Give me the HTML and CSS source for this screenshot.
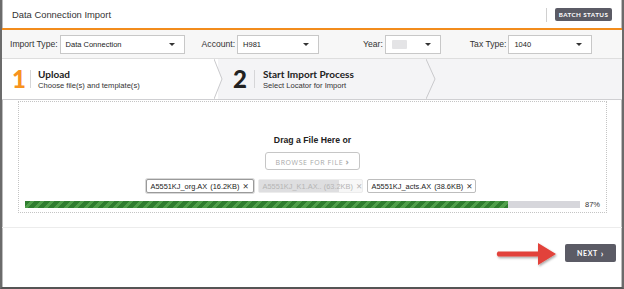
FILE: index.html
```html
<!DOCTYPE html>
<html>
<head>
<meta charset="utf-8">
<link rel="stylesheet" href="styles.css">
</head>
<body>
<div class="frame">
  <header class="header">
    <div class="title">Data Connection Import</div>
    <div class="header-right">
      <span class="vdiv"></span>
      <button class="btn-dark batch">BATCH STATUS</button>
    </div>
  </header>

  <div class="filters">
    <div class="fgroup g1">
      <label class="flabel">Import Type:</label>
      <div class="select s1"><span class="sval">Data Connection</span><span class="caret"></span></div>
    </div>
    <div class="fgroup g2">
      <label class="flabel">Account:</label>
      <div class="select s2"><span class="sval">H981</span><span class="caret"></span></div>
    </div>
    <div class="fgroup g3">
      <label class="flabel">Year:</label>
      <div class="select s3"><span class="blur"></span><span class="caret"></span></div>
    </div>
    <div class="fgroup g4">
      <label class="flabel">Tax Type:</label>
      <div class="select s4"><span class="sval">1040</span><span class="caret"></span></div>
    </div>
  </div>

  <div class="steps">
    <div class="step active">
      <span class="num orange">1</span>
      <span class="sdiv"></span>
      <div class="stext">
        <div class="stitle">Upload</div>
        <div class="ssub">Choose file(s) and template(s)</div>
      </div>
      <svg class="chev" width="12" height="40" viewBox="0 0 12 40"><path d="M0 0 L8 20 L0 40 Z" fill="#fff"/><path d="M0 0 L8 20 L0 40" fill="none" stroke="#c9c9cc" stroke-width="1"/></svg>
    </div>
    <div class="step second">
      <span class="num">2</span>
      <span class="sdiv"></span>
      <div class="stext">
        <div class="stitle">Start Import Process</div>
        <div class="ssub">Select Locator for Import</div>
      </div>
      <svg class="chev" width="12" height="40" viewBox="0 0 12 40"><path d="M0 0 L9 20 L0 40" fill="none" stroke="#c9c9cc" stroke-width="1"/></svg>
    </div>
    <div class="step rest"></div>
  </div>

  <main class="body">
    <div class="dropzone">
      <div class="dragtext">Drag a File Here or</div>
      <button class="browse">BROWSE FOR FILE <span class="gt">&#8250;</span></button>
      <div class="chips">
        <div class="chip c1">A5551KJ_org.AX<span class="redact"></span>&nbsp;(16.2KB)<span class="x">&#10005;</span></div>
        <div class="chip c2"><span class="fill"></span><span class="ctext">A5551KJ_K1.AX.. (63.2KB)<span class="x">&#10005;</span></span></div>
        <div class="chip c3">A5551KJ_acts.AX<span class="redact"></span>&nbsp;(38.6KB)<span class="x">&#10005;</span></div>
      </div>
      <div class="progress-row">
        <div class="track"><div class="bar" style="width:87%"></div></div>
        <span class="pct">87%</span>
      </div>
    </div>
  </main>

  <footer class="footer">
    <button class="btn-dark next">NEXT <span class="gt">&#8250;</span></button>
    <svg class="arrow" width="70" height="30" viewBox="0 0 70 30">
      <defs>
        <filter id="sh" x="-20%" y="-30%" width="140%" height="160%">
          <feDropShadow dx="1" dy="1.5" stdDeviation="1.2" flood-color="#000" flood-opacity="0.35"/>
        </filter>
      </defs>
      <path d="M4 12.5 L44 12.5 L44 4 L62 15 L44 26 L44 17.5 L4 17.5 Q1.5 15 4 12.5 Z" fill="#e2423a" filter="url(#sh)"/>
    </svg>
  </footer>
</div>
</body>
</html>
```

FILE: styles.css
```css
* { box-sizing: border-box; }
html, body { margin: 0; padding: 0; background: #fff; }
body { width: 624px; height: 289px; overflow: hidden; font-family: "Liberation Sans", Arial, sans-serif; color: #222; }

.frame {
  position: relative;
  width: 624px;
  height: 289px;
  border-left: 2px solid #6b6b6b;
  border-right: 2px solid #6b6b6b;
  border-bottom: 2px solid #555;
  box-shadow: inset 1px 0 0 #bdbdbd, inset -1px 0 0 #bdbdbd;
  display: flex;
  flex-direction: column;
}

.header {
  height: 30px;
  flex: none;
  display: flex;
  align-items: center;
  justify-content: space-between;
  padding: 1px 10px 0 10px;
  border-bottom: 2px solid #f28c1c;
}
.title { font-size: 9.4px; color: #333; }
.header-right { display: flex; align-items: center; gap: 8px; }
.vdiv { width: 1px; height: 14px; background: #d0d0d0; }
.btn-dark {
  border: none;
  background: #5b5b65;
  color: #fff;
  font-family: "Lato", sans-serif;
  font-weight: 700;
  border-radius: 2px;
  padding: 0;
  cursor: pointer;
  display: inline-flex;
  align-items: center;
  justify-content: center;
  gap: 3px;
}
.batch { width: 57px; height: 13px; font-size: 6.3px; letter-spacing: 0.4px; }

.filters {
  height: 29px;
  flex: none;
  display: flex;
  align-items: center;
  padding-left: 8px;
  background: #f7f7f7;
  border-bottom: 1px solid #dedede;
}
.fgroup { display: flex; align-items: center; gap: 2px; }
.g2 { margin-left: 17px; }
.g3 { margin-left: 44px; }
.g4 { margin-left: 29px; }
.flabel { font-size: 8.6px; color: #333; }
.select {
  height: 19px;
  background: #fff;
  border: 1px solid #c8c8c8;
  display: flex;
  align-items: center;
  justify-content: space-between;
  padding: 0 9px 0 5px;
}
.s1 { width: 125px; }
.s2 { width: 82px; }
.s3 { width: 56px; }
.s4 { width: 84px; }
.sval { font-size: 7.5px; color: #222; }
.caret { width: 0; height: 0; border-left: 3px solid transparent; border-right: 3px solid transparent; border-top: 3px solid #333; }
.blur { width: 15px; height: 9px; background: #e4e4e6; border-radius: 1px; margin-left: 1px; }

.steps {
  height: 41px;
  flex: none;
  display: flex;
  background: #f4f4f6;
  border-bottom: 1px solid #cfcfd2;
}
.step { position: relative; display: flex; align-items: center; }
.step.active { width: 216px; background: #fff; padding-left: 10px; }
.step.second { width: 212px; padding-left: 15px; }
.chev { position: absolute; right: -8px; top: 0; }
.rest { flex: 1; }
.num { font-family: "Lato", sans-serif; font-weight: 900; font-size: 24px; line-height: 1; color: #222; width: 14px; text-align: center; }
.num.orange { color: #f7931e; width: 12px; }
.sdiv { width: 1px; height: 18px; background: #d6d6d8; margin: 0 8px 0 7px; }
.active .sdiv { margin: 0 7px 0 6px; }
.stext { display: flex; flex-direction: column; gap: 3px; }
.stitle { font-family: "Lato", sans-serif; font-weight: 700; font-size: 10px; color: #222; line-height: 1; }
.ssub { font-size: 7.6px; color: #333; line-height: 1; }

.body {
  flex: none;
  height: 128px;
  padding: 1px 15px 0 16px;
  border-bottom: 1px solid #ececec;
}
.dropzone {
  height: 112px;
  border: 1px dotted #c4c4c4;
  display: flex;
  flex-direction: column;
  align-items: center;
  padding-top: 32px;
}
.dragtext { font-weight: 700; font-size: 8.7px; color: #222; line-height: 12px; }
.browse {
  margin-top: 6px;
  width: 95px;
  height: 18px;
  background: #fff;
  border: 1px solid #c6c6c6;
  border-radius: 3px;
  color: #a8a8a8;
  font-family: "Open Sans", sans-serif;
  font-size: 7px;
  letter-spacing: 0.6px;
  padding: 0;
}
.gt { font-weight: 700; font-size: 9px; }
.chips { display: flex; gap: 4px; margin-top: 9px; margin-right: 4px; }
.chip {
  position: relative;
  height: 14px;
  border: 1px solid #bdbdbd;
  border-radius: 2px;
  font-size: 7.4px;
  color: #222;
  display: flex;
  align-items: center;
  padding: 0 4px;
  background: #fff;
  white-space: nowrap;
}
.c1 { width: 108px; border: 1px solid #9a9a9a; box-shadow: 0 0 0 1px #d8d8d8; }
.c2 { width: 105px; border-color: #ececec; background: #f7f7f7; color: #b5b5b5; }
.c3 { width: 109px; }
.c2 .fill { position: absolute; left: 0; top: 0; bottom: 0; width: 80px; background: #dedee0; }
.c2 .ctext { position: relative; display: flex; align-items: center; }
.redact { display: inline-block; width: 5px; height: 8px; background: #e8e8e8; margin-left: 1px; }
.x { font-size: 7.5px; margin-left: 3px; color: #333; font-family: "DejaVu Sans", sans-serif; }
.c2 .x { color: #b5b5b5; }

.progress-row { display: flex; align-items: center; width: 100%; padding: 0 6px; margin-top: 7px; }
.track { width: 555px; height: 7px; background: #d6d6db; }
.bar {
  height: 100%;
  background: repeating-linear-gradient(135deg, #2f7d2f 0 4px, #4f9e4a 4px 7px);
}
.pct { font-size: 7.5px; color: #333; margin-left: 5px; }

.footer { flex: 1; position: relative; display: flex; justify-content: flex-end; align-items: flex-start; padding: 16px 6px 0 0; }
.next { width: 51px; height: 18px; font-size: 7px; letter-spacing: 0.6px; }
.next .gt { font-size: 9px; }
.arrow { position: absolute; left: 492px; top: 11px; }
```
